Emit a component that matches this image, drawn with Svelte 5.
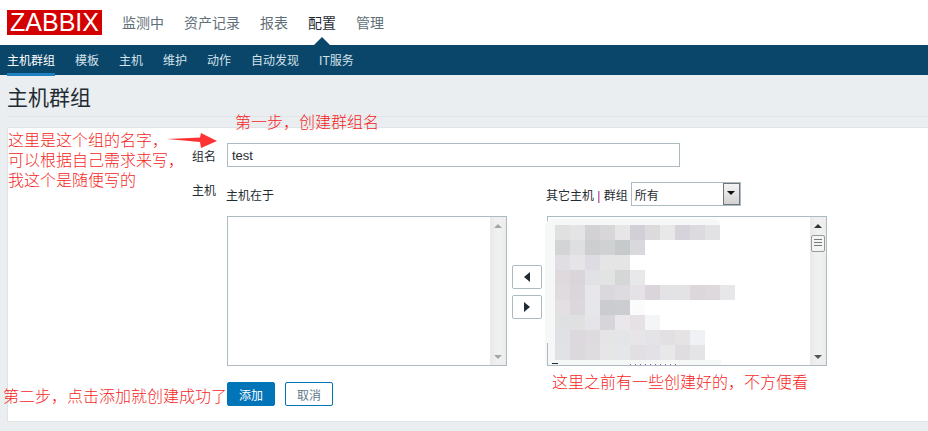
<script>
  const topNav = ['监测中', '资产记录', '报表', '配置', '管理'];
  const subNav = ['主机群组', '模板', '主机', '维护', '动作', '自动发现', 'IT服务'];

  // mosaic over the host names in the right list, one array per row
  const blur = [
    ['e0e0e1', 'e4e4e6', 'd2d2d4', 'd9d6da', 'e6e6e7', 'd2d0d6', 'dcdadd', 'e8e8e9', 'd6d4da', 'dcdade', 'e2e2e4'],
    ['d3d4d6', 'dfdfe1', 'cdcfce', 'cfd1d2', 'c6cacb', 'd9d8dd'],
    ['e0dee2', 'e6e4e7', 'dddce2', 'e6e5e6', 'e5e5e6'],
    ['dfd9de', 'd9d5da', 'e2e1e6', 'e2e4e3', 'd5d6d6', 'e8e8eb'],
    ['e0dbdf', 'dad6db', 'e7e7e9', 'dad8dc', 'dddbde', 'e4e2e7', 'dad5da', 'e3e2e5', 'e3e2e4', 'dcd7db', 'ddd9dc', 'e7e7e9'],
    ['e3dfe3', 'dbd7dc', 'e7e7e9', 'cacccf', 'cbcdd0', 'fbfbfb'],
    ['dfe0e2', 'e1e0e1', 'e5e4e8', 'd8d5da', 'e9e7ea', 'e6e1e5', 'f4f5f7'],
    ['e0e1e5', 'dcd8dd', 'dedbdf', 'e6e5e6', 'e4e5e8', 'e7e5e7', 'e4e3e8', 'e2e0e3', 'e6e3e5', 'f0f1f4'],
    ['e1e2e6', 'dcd9dd', 'dfdce0', 'e7e6e7', 'e5e6e9', 'e2dfe3', 'e3e1e5', 'e8e8e9', 'e0dde1', 'e4e3e5']
  ];
</script>

<div class="page">
  <header class="top">
    <div class="logo">ZABBIX</div>
    <nav class="top-nav">
      {#each topNav as item}
        <span class:current={item === '配置'}>{item}</span>
      {/each}
    </nav>
  </header>

  <nav class="sub-nav">
    {#each subNav as item}
      <span class:active={item === '主机群组'}>{item}</span>
    {/each}
  </nav>

  <h1>主机群组</h1>

  <main class="panel">
    <div class="row name-row">
      <label for="group-name">组名</label>
      <input id="group-name" value="test" />
    </div>

    <div class="row hosts-row">
      <span class="row-label">主机</span>
      <div class="twin">
        <div class="col">
          <div class="col-head"><span class="in-label">主机在于</span></div>
          <div class="list">
            <div class="scrollbar">
              <i class="up"></i>
              <i class="down"></i>
            </div>
          </div>
        </div>

        <div class="moves">
          <button type="button" aria-label="left"><svg width="8" height="10" viewBox="0 0 8 10"><path d="M7 0v10L1 5z" /></svg></button>
          <button type="button" aria-label="right"><svg width="8" height="10" viewBox="0 0 8 10"><path d="M1 0v10l6-5z" /></svg></button>
        </div>

        <div class="col">
          <div class="col-head other">
            <span class="other-label">其它主机 <em>|</em> 群组</span>
            <div class="select">
              <span>所有</span>
              <b><i></i></b>
            </div>
          </div>
          <div class="list">
            <div class="mosaic">
              {#each blur as cells}
                <div class="mosaic-row">
                  {#each cells as c}
                    <span style="background:#{c}"></span>
                  {/each}
                </div>
              {/each}
              <s class="cut-t"></s>
              <s class="cut-dots"></s>
            </div>
            <div class="scrollbar dark">
              <i class="up"></i>
              <u class="thumb"></u>
              <i class="down"></i>
            </div>
          </div>
        </div>
      </div>
    </div>

    <div class="actions">
      <button type="button" class="primary">添加</button>
      <button type="button" class="ghost">取消</button>
    </div>
  </main>

  <!-- red notes painted on top of the screenshot -->
  <div class="note step-one">第一步，创建群组名</div>
  <div class="note explain">这里是这个组的名字，<br />可以根据自己需求来写，<br />我这个是随便写的</div>
  <svg class="arrow" width="52" height="18" viewBox="0 0 52 18"><path d="M0 6 33 4.5 34 0 50 8 34 15 33 9z" /></svg>
  <div class="note step-two">第二步，点击添加就创建成功了</div>
  <div class="note existing">这里之前有一些创建好的，不方便看</div>
</div>

<style>
  :global(body) {
    margin: 0;
    background: #ebeef0;
  }

  .page {
    position: relative;
    height: 431px;
    overflow: hidden;
    background: #ebeef0;
    font-family: "Liberation Sans", "Noto Sans CJK SC", sans-serif;
    font-size: 12px;
    color: #1f2c33;
  }

  .top {
    height: 45px;
    box-sizing: border-box;
    display: flex;
    align-items: flex-start;
    gap: 20px;
    padding: 10px 0 0 7px;
    background: #fff;
  }

  .logo {
    width: 95px;
    height: 25px;
    background: #d40000;
    color: #fff;
    font-size: 25px;
    line-height: 25px;
    text-align: center;
  }

  .top-nav {
    display: flex;
    gap: 20px;
    font-size: 14px;
    line-height: 20px;
    padding-top: 3px;
    color: #5f6f78;
  }

  .top-nav span {
    position: relative;
  }

  .top-nav .current {
    color: #1f2c33;
  }

  .top-nav .current::after {
    content: "";
    position: absolute;
    left: 6px;
    top: 24px;
    border: 8px solid transparent;
    border-top: 0;
    border-bottom-color: #0a466a;
  }

  .sub-nav {
    height: 30px;
    box-sizing: border-box;
    display: flex;
    gap: 20px;
    padding-left: 7px;
    background: #0a466a;
    color: #d3e2ea;
    line-height: 32px;
  }

  .sub-nav span {
    height: 31px;
  }

  .sub-nav .active {
    color: #fff;
    box-shadow: inset 0 -3px 0 #1f80c4;
  }

  h1 {
    margin: 0 0 0 7px;
    height: 42px;
    box-sizing: border-box;
    border-bottom: 1px solid #dfe4e7;
    font-size: 21px;
    font-weight: 400;
    line-height: 46px;
    color: #1f2c33;
  }

  .panel {
    margin: 10px 0 0 7px;
    height: 295px;
    box-sizing: border-box;
    border: 1px solid #dfe4e7;
    border-right: 0;
    background: #fff;
    padding-top: 15px;
  }

  .row {
    display: flex;
    padding-left: 184px;
  }

  .row label,
  .row-label {
    width: 24px;
    margin-right: 11px;
    flex: none;
  }

  .name-row {
    align-items: center;
    height: 24px;
  }

  input {
    width: 453px;
    height: 24px;
    box-sizing: border-box;
    border: 1px solid #acbbc2;
    padding: 0 4px;
    font: 13px "Liberation Sans", sans-serif;
    color: #1f2c33;
    outline: none;
  }

  .hosts-row {
    margin-top: 15px;
  }

  .row-label {
    line-height: 18px;
  }

  .twin {
    display: flex;
  }

  .col {
    width: 280px;
  }

  .col-head {
    height: 34px;
    display: flex;
    align-items: flex-start;
    line-height: 16px;
    box-sizing: border-box;
  }

  .col-head > span {
    margin-top: 6px;
  }

  .in-label {
    margin-left: -1px;
  }

  .col-head.other {
    margin-left: -1px;
    gap: 3px;
  }

  .col-head em {
    font-style: normal;
    color: #a0207a;
  }

  .select {
    width: 110px;
    height: 24px;
    box-sizing: border-box;
    border: 1px solid #acbbc2;
    display: flex;
    justify-content: space-between;
    padding-left: 3px;
    line-height: 27px;
  }

  .select b {
    width: 17px;
    box-sizing: border-box;
    border: 1px solid #6f7578;
    background: linear-gradient(#f4f4f4, #d2d2d2);
    display: flex;
    justify-content: center;
    padding-top: 7px;
  }

  .select i {
    width: 0;
    height: 0;
    border: 4px solid transparent;
    border-bottom: 0;
    border-top: 4px solid #111;
  }

  .list {
    position: relative;
    width: 280px;
    height: 150px;
    box-sizing: border-box;
    border: 1px solid #acbbc2;
    display: flex;
    justify-content: flex-end;
  }

  .mosaic {
    position: absolute;
    left: -3px;
    top: 2px;
    bottom: 0;
    width: 176px;
    padding: 6px 0 0 10px;
    box-sizing: border-box;
    background: #f6f7f7;
    border-radius: 8px 8px 0 0;
  }

  /* the list border shows again under the blur near the bottom */
  .mosaic::after {
    content: "";
    position: absolute;
    left: 2px;
    top: 124px;
    bottom: 0;
    width: 1px;
    background: #acbbc2;
  }

  .mosaic-row {
    display: flex;
    width: 190px;
    height: 15px;
    background: #fff;
  }

  .mosaic-row span {
    width: 15px;
    height: 15px;
  }

  /* tips of the next host name, cut off by the list edge */
  .cut-t {
    position: absolute;
    left: 7px;
    bottom: 1px;
    width: 6px;
    height: 1px;
    background: #1f2c33;
  }

  .cut-dots {
    position: absolute;
    left: 85px;
    bottom: 0;
    width: 48px;
    height: 1px;
    background: repeating-linear-gradient(90deg, #8a5aa0 0 1px, #fff 1px 5px);
  }

  .scrollbar {
    width: 16px;
    background: linear-gradient(90deg, #e9e9e9, #f1f1f1 50%, #ececec);
    display: flex;
    flex-direction: column;
    align-items: center;
    position: relative;
    padding-top: 7px;
  }

  .scrollbar i {
    width: 0;
    height: 0;
    border: 4px solid transparent;
  }

  .scrollbar .up {
    border-top: 0;
    border-bottom: 4px solid #a5a5a5;
  }

  .scrollbar .down {
    border-bottom: 0;
    border-top: 4px solid #a5a5a5;
    position: absolute;
    bottom: 6px;
  }

  .scrollbar.dark .up {
    border-bottom-color: #333;
  }

  .scrollbar.dark .down {
    border-top-color: #555;
  }

  .thumb {
    width: 14px;
    height: 17px;
    margin-top: 7px;
    box-sizing: border-box;
    border: 1px solid #9a9a9a;
    border-radius: 2px;
    background: repeating-linear-gradient(#777 0 1px, #f4f4f4 1px 3px) center / 8px 9px no-repeat, #f4f4f4;
  }

  .moves {
    width: 40px;
    padding: 83px 0 0 5px;
    box-sizing: border-box;
    display: flex;
    flex-direction: column;
    gap: 6px;
  }

  .moves button {
    width: 30px;
    height: 24px;
    padding: 0;
    box-sizing: border-box;
    border: 1px solid #acbbc2;
    border-radius: 2px;
    background: #fff;
    display: flex;
    align-items: center;
    justify-content: center;
  }

  .moves path {
    fill: #1f2c33;
  }

  .actions {
    display: flex;
    gap: 10px;
    margin-top: 16px;
    padding-left: 219px;
  }

  .actions button {
    width: 48px;
    height: 24px;
    box-sizing: border-box;
    border: 1px solid #0275b8;
    border-radius: 2px;
    padding: 0;
    font: inherit;
  }

  .primary {
    background: #0275b8;
    color: #fff;
  }

  .ghost {
    background: #fff;
    color: #5f7a8a;
  }

  .note {
    position: absolute;
    color: #f41f1f;
    font-size: 16px;
    font-weight: 300;
    line-height: 20px;
    white-space: nowrap;
  }

  .step-one {
    left: 235px;
    top: 113px;
  }

  .explain {
    left: 8px;
    top: 131px;
  }

  .step-two {
    left: 3px;
    top: 387px;
  }

  .existing {
    left: 552px;
    top: 373px;
  }

  .arrow {
    position: absolute;
    left: 167px;
    top: 133px;
  }

  .arrow path {
    fill: #f33;
  }
</style>
